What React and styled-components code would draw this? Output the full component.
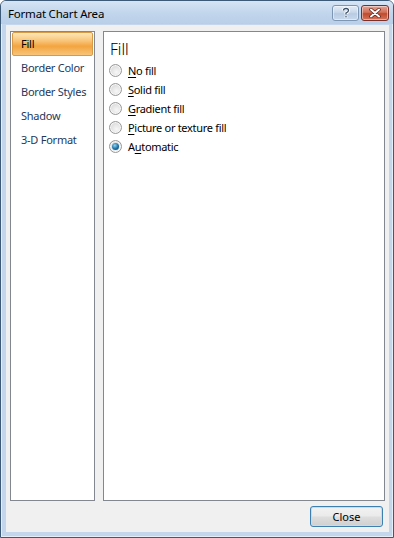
import React, { useState } from "react";
import styled, { createGlobalStyle } from "styled-components";

const Global = createGlobalStyle`
  html, body { margin: 0; padding: 0; background: #ffffff; }
  body { font-family: "Noto Sans", "Open Sans", sans-serif; }
`;

const Window = styled.div`
  width: 394px;
  height: 538px;
  box-sizing: border-box;
  border: 1px solid #3d5a78;
  border-radius: 6px 6px 0 0;
  background: #c3d6ec;
  display: flex;
  flex-direction: column;
  overflow: hidden;
  box-shadow: inset 0 0 0 1px #e4eef9;
`;

const TitleBar = styled.div`
  height: 23px;
  display: flex;
  align-items: center;
  padding: 0 4px 0 7px;
  background: linear-gradient(#d6e5f5, #c2d6ec 50%, #b9cfe8);
`;

const Title = styled.div`
  flex: 1;
  font-size: 11.5px;
  letter-spacing: -0.2px;
  color: #000;
  padding-top: 1px;
`;

const CaptionButton = styled.button`
  width: ${(p) => p.$w}px;
  height: 16px;
  margin-left: 2px;
  padding: 0;
  border: 1px solid ${(p) => (p.$red ? "#7a2f2a" : "#7d96b3")};
  border-radius: 3px;
  background: ${(p) =>
    p.$red
      ? "linear-gradient(#e8a493, #d1715a 45%, #c04a2e 55%, #d3765c)"
      : "linear-gradient(#e3ecf6, #c8d8ea 45%, #b7cbe2 55%, #c9d9ec)"};
  display: flex;
  align-items: center;
  justify-content: center;
  box-shadow: inset 0 0 0 1px rgba(255, 255, 255, 0.45);
`;

const Frame = styled.div`
  flex: 1;
  margin: 1px 4px 5px 5px;
  background: #f0f0f0;
  display: flex;
  flex-direction: column;
  padding: 6px 4px 5px 4px;
`;

const Body = styled.div`
  flex: 1;
  display: flex;
  gap: 8px;
`;

const Nav = styled.div`
  width: 85px;
  box-sizing: border-box;
  background: #fff;
  border: 1px solid #828790;
  padding: 0 1px;
  display: flex;
  flex-direction: column;
`;

const NavItem = styled.div`
  height: 24px;
  box-sizing: border-box;
  display: flex;
  align-items: center;
  padding-left: 8px;
  padding-bottom: 1px;
  font-size: 11px;
  letter-spacing: -0.25px;
  border-radius: 2px;
  border: 1px solid ${(p) => (p.$active ? "#d89a45" : "transparent")};
  background: ${(p) =>
    p.$active
      ? "linear-gradient(#fde7b8, #f9c57a 35%, #f3a53f 60%, #f8c47a)"
      : "transparent"};
  color: ${(p) => (p.$active ? "#000" : "#1e395b")};
  cursor: default;
`;

const Panel = styled.div`
  flex: 1;
  background: #fff;
  border: 1px solid #828790;
  padding: 4px 4px;
`;

const Heading = styled.div`
  font-size: 15.5px;
  font-weight: 300;
  color: #000;
  height: 25px;
  display: flex;
  align-items: center;
  margin-left: 2px;
`;

const Options = styled.div`
  display: flex;
  flex-direction: column;
`;

const Option = styled.label`
  height: 19px;
  display: flex;
  align-items: center;
  gap: 6px;
  font-size: 11px;
  letter-spacing: -0.3px;
  color: #000;
  cursor: default;
  u { text-decoration: underline; text-underline-offset: 2px; }
`;

const Radio = styled.span`
  width: 11px;
  height: 11px;
  margin-left: 1px;
  border-radius: 50%;
  border: 1px solid #989898;
  background: radial-gradient(circle at 60% 65%, #f7f7f7, #dcdcdc 70%, #cacaca);
  display: flex;
  align-items: center;
  justify-content: center;
  box-shadow: inset 0 0 0 1px #f7f7f7;
  &::after {
    content: "";
    display: ${(p) => (p.$on ? "block" : "none")};
    width: 7px;
    height: 7px;
    border-radius: 50%;
    background: radial-gradient(circle at 40% 35%, #8fd4f3, #1b6fa3 55%, #0b3e66);
  }
`;

const Footer = styled.div`
  height: 26px;
  display: flex;
  justify-content: flex-end;
  align-items: flex-end;
`;

const CloseButton = styled.button`
  width: 73px;
  height: 21px;
  margin-right: 2px;
  font-family: inherit;
  font-size: 11px;
  color: #000;
  border: 1px solid #3c7fb1;
  border-radius: 3px;
  background: linear-gradient(#f2f2f2, #ebebeb 45%, #dddddd 55%, #cfcfcf);
  box-shadow: inset 0 0 0 1px #b6e3f7;
  padding: 0 0 1px;
`;

const navItems = ["Fill", "Border Color", "Border Styles", "Shadow", "3-D Format"];

const fills = [
  { key: "N", rest: "o fill" },
  { key: "S", rest: "olid fill" },
  { key: "G", rest: "radient fill" },
  { key: "P", rest: "icture or texture fill" },
  { pre: "A", key: "u", rest: "tomatic" },
];

export default function App() {
  const [active, setActive] = useState(0);
  const [choice, setChoice] = useState(4);

  return (
    <>
      <Global />
      <Window>
        <TitleBar>
          <Title>Format Chart Area</Title>
          <CaptionButton $w={27}>
            <svg width="10" height="12" viewBox="0 0 10 12">
              <path d="M2.5 3.5 Q2.5 1.5 5 1.5 Q7.5 1.5 7.5 3.5 Q7.5 5 5 6 L5 7.5" fill="none" stroke="#fff" strokeWidth="3" />
              <path d="M2.5 3.5 Q2.5 1.5 5 1.5 Q7.5 1.5 7.5 3.5 Q7.5 5 5 6 L5 7.5" fill="none" stroke="#3b4f66" strokeWidth="1.3" />
              <rect x="4" y="8.8" width="2" height="2" fill="#3b4f66" stroke="#fff" strokeWidth="0.6" />
            </svg>
          </CaptionButton>
          <CaptionButton $w={28} $red>
            <svg width="12" height="10" viewBox="0 0 12 10">
              <path d="M2 1.5 L10 8.5 M10 1.5 L2 8.5" stroke="#5a1d12" strokeWidth="3.4" strokeLinecap="round" />
              <path d="M2 1.5 L10 8.5 M10 1.5 L2 8.5" stroke="#fff" strokeWidth="2" strokeLinecap="round" />
            </svg>
          </CaptionButton>
        </TitleBar>
        <Frame>
          <Body>
            <Nav>
              {navItems.map((n, i) => (
                <NavItem key={n} $active={i === active} onClick={() => setActive(i)}>
                  {n}
                </NavItem>
              ))}
            </Nav>
            <Panel>
              <Heading>Fill</Heading>
              <Options>
                {fills.map((f, i) => (
                  <Option key={i} onClick={() => setChoice(i)}>
                    <Radio $on={choice === i} />
                    <span>
                      {f.pre}
                      <u>{f.key}</u>
                      {f.rest}
                    </span>
                  </Option>
                ))}
              </Options>
            </Panel>
          </Body>
          <Footer>
            <CloseButton>Close</CloseButton>
          </Footer>
        </Frame>
      </Window>
    </>
  );
}
